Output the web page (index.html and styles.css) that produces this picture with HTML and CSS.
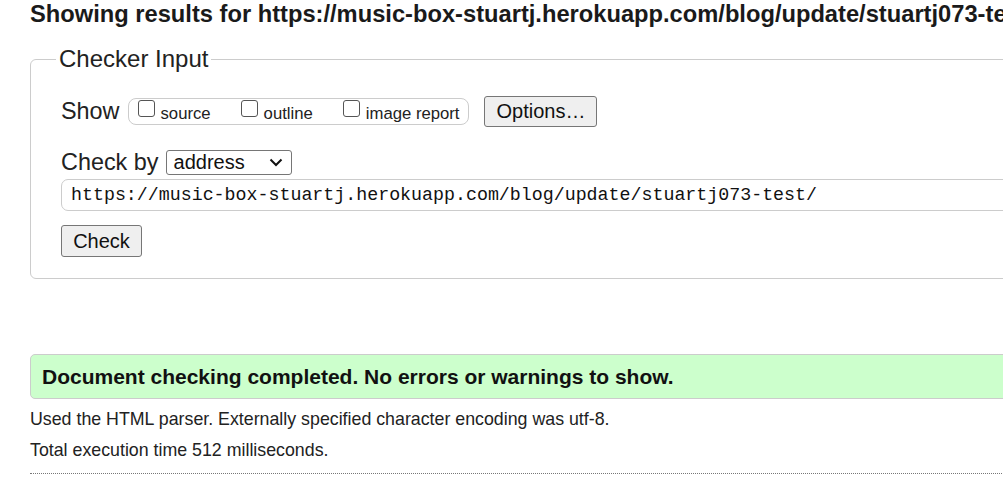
FILE: index.html
```html
<!DOCTYPE html>
<html lang="en">
<head>
<meta charset="utf-8">
<title>Nu Html Checker</title>
<link rel="stylesheet" href="styles.css">
</head>
<body>
<div class="page">
  <h2 class="title">Showing results for https://music-box-stuartj.herokuapp.com/blog/update/stuartj073-test/</h2>
  <fieldset class="checker">
    <legend class="legend">Checker Input</legend>
    <div class="row show-row">
      <span class="label">Show</span>
      <div class="opts">
        <label class="opt"><input type="checkbox" class="cb"><span>source</span></label>
        <label class="opt"><input type="checkbox" class="cb"><span>outline</span></label>
        <label class="opt"><input type="checkbox" class="cb"><span>image report</span></label>
      </div>
      <button class="btn options">Options…</button>
    </div>
    <div class="row by-row">
      <span class="label">Check by</span>
      <div class="select">
        <span>address</span>
        <svg width="14" height="9" viewBox="0 0 14 9"><path d="M1.5 1.5 L7 7 L12.5 1.5" fill="none" stroke="#111" stroke-width="2"/></svg>
      </div>
    </div>
    <div class="url">https://music-box-stuartj.herokuapp.com/blog/update/stuartj073-test/</div>
    <button class="btn check">Check</button>
  </fieldset>
  <div class="success">Document checking completed. No errors or warnings to show.</div>
  <p class="info">Used the HTML parser. Externally specified character encoding was utf-8.</p>
  <p class="info">Total execution time 512 milliseconds.</p>
  <div class="rule"></div>
</div>
</body>
</html>
```
FILE: styles.css
```css
html { overflow: hidden; }
body {
  margin: 0;
  font-family: "Liberation Sans", Arial, sans-serif;
  color: #222;
  background: #fff;
}
.page {
  width: 1400px;
  padding-left: 30px;
}
.title {
  margin: 1px 0 0;
  font-size: 23.7px;
  line-height: 27px;
  font-weight: bold;
  color: #1a1a1a;
  white-space: nowrap;
}
.checker {
  margin: 17px 0 0;
  border: 1px solid #ccc;
  border-radius: 6px;
  padding: 23px 30px 21px 30px;
}
.legend {
  font-size: 24px;
  line-height: 28px;
  padding: 0 3px;
  margin-left: -5px;
  color: #222;
}
.row {
  display: flex;
  align-items: center;
}
.label {
  font-size: 23.4px;
  line-height: 27px;
  color: #222;
}
.show-row {
  height: 31px;
}
.opts {
  display: flex;
  align-items: flex-start;
  margin-left: 8px;
  height: 27px;
  box-sizing: border-box;
  border: 1px solid #ccc;
  border-radius: 8px;
  padding: 0 9px 0 9px;
  gap: 30px;
}
.opt {
  display: flex;
  align-items: flex-start;
  font-size: 16.7px;
  color: #222;
}
.opt span {
  margin-top: 5px;
  line-height: 19px;
}
.cb {
  appearance: none;
  -webkit-appearance: none;
  width: 17px;
  height: 17px;
  margin: 1px 6px 0 0;
  border: 1px solid #555;
  border-radius: 3px;
  background: #fff;
}
.btn {
  font-family: "Liberation Sans", Arial, sans-serif;
  font-size: 20px;
  color: #111;
  background: #efefef;
  border: 1px solid #767676;
  border-radius: 3px;
  padding: 0;
}
.options {
  margin-left: 15px;
  width: 113px;
  height: 31px;
}
.by-row {
  margin-top: 22px;
}
.select {
  margin-left: 7px;
  width: 126px;
  height: 25px;
  box-sizing: border-box;
  border: 1px solid #767676;
  border-radius: 3px;
  display: flex;
  align-items: center;
  justify-content: space-between;
  padding: 0 8px 0 7px;
  font-size: 20px;
  color: #111;
}
.select span { line-height: 23px; }
.url {
  margin-top: 3px;
  height: 32px;
  box-sizing: border-box;
  border: 1px solid #ccc;
  border-radius: 7px;
  padding: 0 9px;
  font-family: "Liberation Mono", "DejaVu Sans Mono", monospace;
  font-size: 18.3px;
  line-height: 30px;
  color: #111;
  white-space: nowrap;
}
.check {
  display: block;
  margin-top: 14px;
  width: 81px;
  height: 32px;
}
.success {
  margin-top: 75px;
  height: 45px;
  box-sizing: border-box;
  background: #ccffcc;
  border: 1px solid #ccc;
  border-radius: 5px;
  padding: 0 11px;
  font-size: 21px;
  font-weight: bold;
  line-height: 43px;
  color: #111;
  white-space: nowrap;
}
.info {
  margin: 0;
  font-size: 17.8px;
  line-height: 31px;
  color: #222;
}
.info:first-of-type { margin-top: 5px; }
.rule {
  margin-top: 7px;
  border-top: 1px dotted #777;
}
```
